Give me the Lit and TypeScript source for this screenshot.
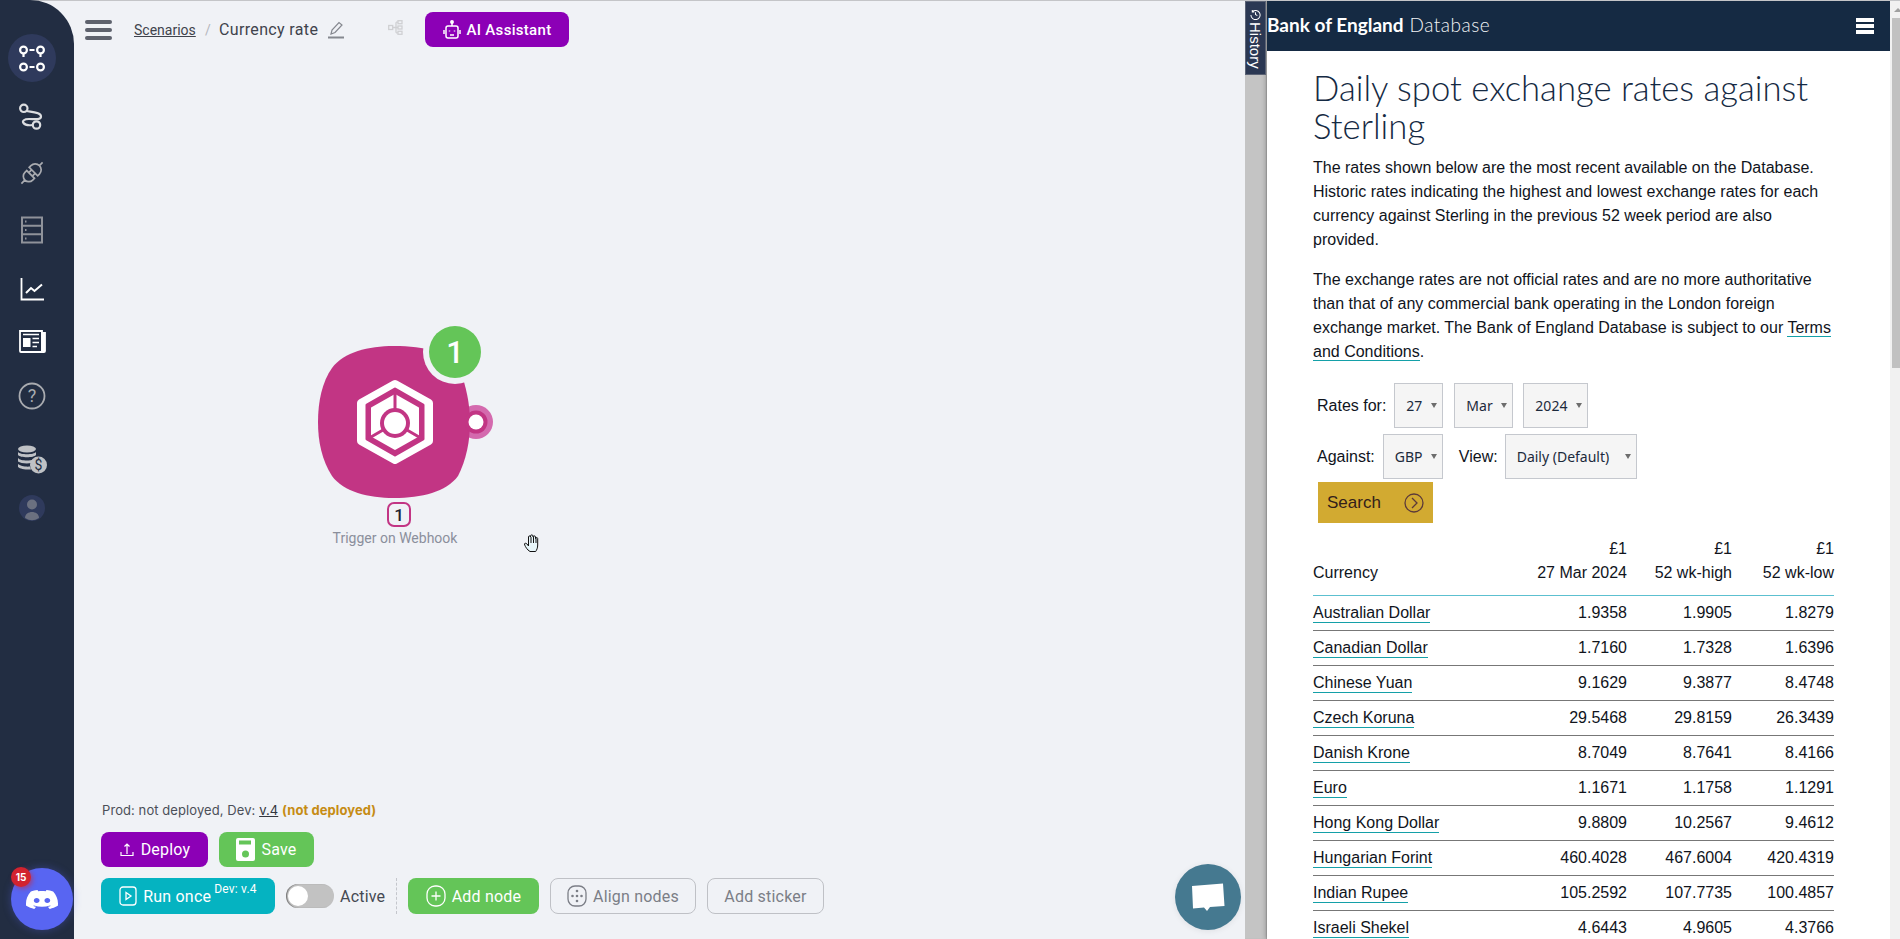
import { LitElement, html, css, svg } from "lit";
import { customElement } from "lit/decorators.js";

const rows = [
  ["Australian Dollar", "1.9358", "1.9905", "1.8279"],
  ["Canadian Dollar", "1.7160", "1.7328", "1.6396"],
  ["Chinese Yuan", "9.1629", "9.3877", "8.4748"],
  ["Czech Koruna", "29.5468", "29.8159", "26.3439"],
  ["Danish Krone", "8.7049", "8.7641", "8.4166"],
  ["Euro", "1.1671", "1.1758", "1.1291"],
  ["Hong Kong Dollar", "9.8809", "10.2567", "9.4612"],
  ["Hungarian Forint", "460.4028", "467.6004", "420.4319"],
  ["Indian Rupee", "105.2592", "107.7735", "100.4857"],
  ["Israeli Shekel", "4.6443", "4.9605", "4.3766"],
];

const navIcons = [
  svg`<svg width="30" height="30" viewBox="0 0 30 30" fill="none" stroke="#fff" stroke-width="2.2"><circle cx="6.5" cy="7" r="3.4"/><circle cx="23.5" cy="7" r="3.4"/><circle cx="6.5" cy="24" r="3.4"/><circle cx="23.500" cy="24" r="3.4"/><path d="M12.500 7h5M6.500 10.500v3.500M23.500 10.500v3.500M12.500 24h5"/></svg>`,
  svg`<svg width="30" height="30" viewBox="0 0 30 30" fill="none" stroke="#dcdde0" stroke-width="2.2"><circle cx="6.800" cy="7.300" r="3.700"/><circle cx="19.500" cy="24" r="3.700"/><path d="M9.500 10C13 11 24 11 24 15.500C24 19 19 18 12 18C7 18 5 20 6.500 22C8 24 12 24.500 15.500 24"/></svg>`,
  svg`<svg width="30" height="30" viewBox="0 0 30 30" fill="none" stroke="#a9abb0" stroke-width="1.700"><g transform="rotate(-45 15 15)"><path d="M0 15h5.500M13 9.500H10.500a5.500 5.500 0 0 0 0 11H13zM13 12.500h3.500M13 17.500h3.500M17 9h2.500a6 6 0 0 1 0 12H17zM25.500 15H30"/></g></svg>`,
  svg`<svg width="30" height="30" viewBox="0 0 30 30" fill="none" stroke="#8f929a" stroke-width="2"><rect x="5" y="2.500" width="20" height="25"/><path d="M5 10.800h20M5 19.200h20"/><path d="M8 6.500h1.500M8 15h1.500M8 23.500h1.500"/></svg>`,
  svg`<svg width="30" height="30" viewBox="0 0 30 30" fill="none" stroke="#fff" stroke-width="1.800"><path d="M4.500 4v21.500H27"/><path d="M9 19l5-5 3.500 3L25 10.500" stroke-width="2"/></svg>`,
  svg`<svg width="30" height="30" viewBox="0 0 30 30" fill="none" stroke="#fff" stroke-width="1.800"><path d="M3 5h22v21H4a1 1 0 0 1-1-1z"/><path d="M25 7h3v18a1 1 0 0 1-1 1h-2z" fill="#fff"/><rect x="6" y="12" width="7.500" height="9" fill="#fff" stroke="none"/><path d="M6 8.500h16M15.500 12.500H22M15.500 16.500H22M15.500 20.500H20" stroke-width="1.600"/></svg>`,
  svg`<svg width="30" height="30" viewBox="0 0 30 30" fill="none"><circle cx="15" cy="15" r="12.500" stroke="#a9abb0" stroke-width="1.800"/><text x="15" y="21" text-anchor="middle" font-family="Roboto" font-size="18" fill="#a9abb0">?</text></svg>`,
  svg`<svg width="32" height="30" viewBox="0 0 32 30" fill="#bfc1c5"><ellipse cx="11" cy="5" rx="9" ry="3.500"/><path d="M2 8c2 3 16 3 18 0v3c-2 3-16 3-18 0zM2 14c2 3 12 3 15 1.500l-1.500 3.500c-4 .8-11 .5-13.500-1.500zM2 20c2 2 8 3 12 2.500l1 3c-5 .3-11-.5-13-2.500z"/><circle cx="22.500" cy="21" r="8.500"/><text x="22.500" y="26" text-anchor="middle" font-family="Roboto" font-size="14" fill="#222d42">$</text></svg>`,
  svg`<svg width="30" height="30" viewBox="0 0 30 30"><circle cx="15" cy="15" r="13" fill="#2f3a5c"/><circle cx="15" cy="11.500" r="5" fill="#6b7080"/><path d="M8 25c0-8 14-8 14 0a13 13 0 0 1-14 0z" fill="#6b7080"/></svg>`,
];

const chev = svg`<svg class="ring" width="20" height="20" viewBox="0 0 20 20" fill="none" stroke="#5c3a3a" stroke-width="1.300"><circle cx="10" cy="10" r="9"/><path d="M8 5l5 5-5 5"/></svg>`;

@customElement("pick-box")
class PickBox extends LitElement {
  static properties = { v: {} };
  v = "";
  static styles = css`
    :host { display: block; position: relative; height: 45px; box-sizing: border-box; border: 1px solid #c5c8ce; background: #f5f5f5; }
    .s { appearance: none; border: 0; background: transparent; width: 100%; height: 100%; padding: 0 0 0 11px; font: 14px "Noto Sans", sans-serif; color: #1c2a3c; outline: none; }
    .a { position: absolute; right: 5px; top: 19px; width: 0; height: 0; border: 3.500px solid transparent; border-top: 5px solid #6d6d6d; border-bottom: 0; }
  `;
  render() {
    return html`<select class="s"><option>${this.v}</option></select><span class="a"></span>`;
  }
}

@customElement("app-root")
export class AppRoot extends LitElement {
  static styles = css`
    :host { display: block; width: 1900px; height: 939px; overflow: hidden; font-family: Roboto, sans-serif; background: #f0f2f6; }
    * { box-sizing: border-box; }
    .page { display: flex; height: 939px; position: relative; }
    .topline { position: absolute; left: 0; right: 0; top: 0; height: 1px; background: #c4c5c8; z-index: 3; }
    .side { width: 74px; flex: none; background: #222d42; border-top-right-radius: 44px; padding: 29px 11px 0 0; display: grid; grid-template-rows: 58px 58px 56px 58px 60px 44px 66px 60px 38px; justify-items: center; align-items: center; position: relative; z-index: 4; }
    .nav { width: 48px; height: 48px; border-radius: 50%; display: flex; align-items: center; justify-content: center; }
    .nav.on { background: #2f3a5c; }
    .canvas { position: relative; width: 1171px; flex: none; display: flex; flex-direction: column; }
    .top { display: flex; align-items: center; height: 35px; margin-top: 12px; padding-left: 11px; color: #3c4048; }
    .burger { width: 27px; display: flex; flex-direction: column; gap: 4px; margin-right: 22px; }
    .burger i { display: block; height: 4px; border-radius: 2px; background: #5e626d; }
    .crumb { font-size: 14px; text-decoration: underline; color: #3f434c; width: 62px; flex: none; }
    .sl { margin: 0 9px; color: #b5b7bd; font-size: 14px; width: 5px; flex: none; }
    .name { font-size: 16px; letter-spacing: .35px; color: #3f434c; width: 99px; flex: none; white-space: nowrap; }
    .pen { margin: 0 0 0 10px; display: flex; }
    .flow { margin: -4px 22px 0 44px; display: flex; }
    .ai { height: 35px; width: 144px; border-radius: 8px; background: #8c00b6; color: #fff; font-size: 15px; font-weight: 500; letter-spacing: .3px; display: flex; align-items: center; justify-content: center; gap: 6px; }
    .bottom { margin-top: auto; padding: 0 0 25px 27px; }
    .status { font-family: Inter, sans-serif; font-size: 13px; letter-spacing: .08px; color: #4b4f58; line-height: 16px; margin: 0 0 14px 1px; }
    .status u { color: #33363d; }
    .status b { color: #c68c14; font-weight: 700; }
    .btns { display: flex; align-items: center; }
    .btns + .btns { margin-top: 11px; }
    .btn { height: 35px; border-radius: 8px; color: #fff; font-size: 16px; letter-spacing: .2px; display: flex; align-items: center; justify-content: center; gap: 6px; flex: none; }
    .tall { height: 36px; }
    .purple { background: #8c00b6; width: 107px; }
    .green { background: #64c558; }
    .save { width: 95px; margin-left: 11px; }
    .run { background: #05b3c1; width: 174px; }
    .run sup { font-size: 12px; align-self: flex-start; margin: 4px 0 0 -3px; line-height: 14px; }
    .toggle { width: 48px; height: 24px; border-radius: 12px; background: #c2c2c2; margin-left: 11px; padding: 2px; box-shadow: inset 1px 0 1px #777; }
    .toggle i { display: block; width: 20px; height: 20px; border-radius: 50%; background: #fff; }
    .act { font-size: 16px; color: #454952; margin-left: 6px; letter-spacing: .2px; width: 45px; flex: none; }
    .dash { height: 36px; border-left: 1px dashed #c4c6cc; margin: 0 11px; }
    .addn { width: 131px; }
    .ghost { border: 1px solid #bfc1c6; color: #7b7e86; background: transparent; margin-left: 11px; }
    .align { width: 146px; }
    .stick { width: 117px; }
    .node { position: absolute; left: 236px; top: 320px; width: 190px; height: 190px; }
    .idx { position: absolute; left: 313px; top: 502px; width: 24px; height: 25px; border: 2px solid #c23584; border-radius: 7px; display: flex; align-items: center; justify-content: center; font-size: 17px; font-weight: 500; color: #1e2230; }
    .lbl { position: absolute; left: 221px; width: 200px; top: 530px; text-align: center; font-size: 14px; color: #8b8f9c; line-height: 16px; }
    .hand { position: absolute; left: 449px; top: 533px; }
    .bubble { position: absolute; left: 1101px; top: 864px; width: 66px; height: 66px; border-radius: 50%; background: #457990; display: flex; align-items: center; justify-content: center; box-shadow: 0 1px 6px rgba(0,0,0,.08); }
    .discord { position: absolute; left: 11px; top: 868px; width: 62px; height: 62px; border-radius: 50%; background: #5865f2; display: flex; align-items: center; justify-content: center; box-shadow: 0 0 8px rgba(88,101,242,.35); z-index: 5; }
    .count { position: absolute; left: 11px; top: 867px; width: 20px; height: 20px; border-radius: 50%; background: #d2232f; color: #fff; font: 700 10px/20px Inter, sans-serif; text-align: center; z-index: 6; box-shadow: 2px 2px 4px rgba(210,35,47,.5); }
    .split { width: 22px; flex: none; background: #c4c4c4; position: relative; box-shadow: inset -1px 0 1px #aaa; }
    .hist { position: absolute; left: 0; top: 1px; width: 21px; height: 74px; background: #2b3853; border: 1px solid #5a6274; color: #fff; display: flex; flex-direction: column; align-items: center; padding-top: 7px; gap: 2px; z-index: 2; }
    .hist span { writing-mode: vertical-rl; font: 15px/1 "Liberation Sans", sans-serif; }
    .panel { width: 623px; flex: none; background: #fff; box-shadow: -2px 0 4px rgba(0,0,0,.18); font-family: "Liberation Sans", Arial, sans-serif; font-size: 16px; line-height: 24px; color: #10141c; position: relative; }
    .head { height: 50px; margin-top: 1px; background: #152a43; color: #fff; display: flex; align-items: center; justify-content: space-between; padding: 0 16px 0 0; font: 19px Lato, sans-serif; }
    .head span { margin-top: -3px; }
    .head b { font-weight: 700; }
    .head em { font-style: normal; font-weight: 300; color: #f2f3f5; margin-left: 6px; letter-spacing: .5px; }
    .menu { width: 18px; display: flex; flex-direction: column; gap: 2px; }
    .menu i { display: block; height: 4px; background: #fff; }
    .body { padding: 18px 0 0 46px; width: 566px; }
    h1 { margin: 0 0 11px; font: 300 34.700px/38px Lato, sans-serif; color: #152a43; }
    p { margin: 0 0 16px; }
    p a { color: inherit; text-decoration: none; border-bottom: 1px solid #14a0a8; }
    .row { display: flex; align-items: center; margin-left: 4px; height: 45px; }
    .row + .row { margin-top: 6px; }
    .first { margin-top: 19px; }
    .r1 { margin-left: 8px; width: 49px; }
    .r2 { margin-left: 11px; width: 59px; }
    .r3 { margin-left: 10px; width: 65px; }
    .g { margin-left: 8px; width: 60px; }
    .vl { margin-left: 16px; }
    .v { margin-left: 7px; width: 132px; }
    .search { margin: 3px 0 0 5px; width: 115px; height: 41px; background: #d2aa31; color: #33201a; font-size: 17px; display: flex; align-items: center; padding: 0 9px; justify-content: space-between; }
    table { border-collapse: collapse; table-layout: fixed; width: 521px; margin-top: 14px; }
    .c1 { width: 200px; }
    .c2 { width: 114px; }
    .c3 { width: 105px; }
    .c4 { width: 102px; }
    th, td { padding: 0; font-weight: 400; text-align: right; }
    th { padding-bottom: 10px; vertical-align: bottom; border-bottom: 1px solid #5cc0d0; }
    td { height: 35px; border-bottom: 1px solid #777; }
    .l { text-align: left; }
    td a { border-bottom: 1.500px solid #14a0a8; padding-bottom: 1px; }
    .bar { width: 10px; flex: none; background: #f1f1f1; position: relative; }
    .bar i { position: absolute; left: 2px; right: 0; top: 18px; height: 350px; background: #c1c1c1; }
    .bar s { position: absolute; left: 4px; top: 8px; border: 4px solid transparent; border-bottom: 4px solid #a0a0a0; border-top: 0; }
  `;

  render() {
    return html`<div class="page">
      <div class="topline"></div>
      <nav class="side">
        ${navIcons.map((ic, i) => html`<div class="nav ${i === 0 ? "on" : ""}">${ic}</div>`)}
      </nav>
      <main class="canvas">
        <div class="top">
          <div class="burger"><i></i><i></i><i></i></div>
          <span class="crumb">Scenarios</span><span class="sl">/</span><span class="name">Currency rate</span>
          <span class="pen"><svg width="16" height="18" viewBox="0 0 16 18" fill="none" stroke="#85888f" stroke-width="1.200"><path d="M3 13l1-4 7-7.500 3 2.500-7 7.500z"/><path d="M0 16.500h16" stroke-width="2"/></svg></span>
          <span class="flow"><svg width="15" height="15" viewBox="0 0 15 15" fill="none" stroke="#cfd0d3" stroke-width="1.300"><rect x=".7" y="5.500" width="4" height="4"/><rect x="10" y=".7" width="4" height="3"/><rect x="10" y="6" width="4" height="3"/><rect x="10" y="11.300" width="4" height="3"/><path d="M4.700 7.500H10M8 2.200v10.600M8 2.200h2M8 12.800h2"/></svg></span>
          <div class="ai"><svg width="18" height="19" viewBox="0 0 18 19" fill="none" stroke="#fff" stroke-width="1.500"><path d="M9 1v5"/><circle cx="9" cy="2" r="1.200" fill="#fff"/><rect x="3" y="6" width="12" height="12" rx="2"/><path d="M1 10v4M17 10v4"/><path d="M6.500 10.500v1M11.500 10.500v1M7 15h4"/></svg>AI Assistant</div>
        </div>

        <svg class="node" viewBox="0 0 190 190">
          <circle cx="166" cy="102" r="17" fill="#d46aae"/>
          <path d="M84 26C115 26 140 32 150 50C156 66 160 84 160 102C160 122 156 140 148 156C136 172 112 178 84 178C58 178 34 172 22 156C12 140 8 122 8 102C8 82 12 62 22 48C34 32 58 26 84 26Z" fill="#c23584"/>
          <circle cx="166" cy="102" r="11.500" fill="#c23584"/>
          <circle cx="166" cy="102" r="7.500" fill="#fff"/>
          <circle cx="145" cy="32" r="32" fill="#f0f2f6"/>
          <circle cx="145" cy="32" r="26" fill="#64c558"/>
          <text x="145" y="43" text-anchor="middle" font-family="Roboto" font-weight="500" font-size="31" fill="#fff">1</text>
          <path d="M85 64L119 83V121L85 140L51 121V83Z" fill="#fff" stroke="#fff" stroke-width="8" stroke-linejoin="round"/>
          <path d="M85 69L113 85V119L85 135L57 119V85Z" fill="#c23584" stroke="#c23584" stroke-width="3" stroke-linejoin="round"/>
          <path d="M85 75L108 88V116L85 129L62 116V88Z" fill="#fff" stroke="#fff" stroke-width="2" stroke-linejoin="round"/>
          <path d="M85 72V103M85 103L61 117M85 103L109 117" stroke="#c23584" stroke-width="3"/>
          <circle cx="85" cy="103" r="15" fill="#c23584"/>
          <circle cx="85" cy="103" r="11" fill="#fff"/>
        </svg>
        <div class="idx">1</div>
        <div class="lbl">Trigger on Webhook</div>
        <svg class="hand" width="20" height="20" viewBox="0 0 20 20" fill="#e8f6fa" stroke="#111" stroke-width="1"><path d="M5 17C3 15 1.500 12 1.500 11c0-1 1.500-1 2.500 0l1.500 2V4c0-1.500 2-1.500 2 0V3c0-1.500 2.500-1.500 2.500 0v1c0-1.500 2.500-1.500 2.500 0v1.500c0-1.300 2.200-1.300 2.200 0V12c0 3-1 5-2 6.500H7z"/><path d="M8 4v6M10.500 4v6M13 5v5" fill="none"/></svg>

        <section class="bottom">
          <div class="status">Prod: not deployed, Dev: <u>v.4</u> <b>(not deployed)</b></div>
          <div class="btns">
            <div class="btn purple"><svg width="16" height="16" viewBox="0 0 16 16" fill="none" stroke="#fff" stroke-width="1.200"><path d="M8 12V2M5.500 4.500L8 2l2.500 2.500M2 10v3.500h12V10"/></svg>Deploy</div>
            <div class="btn green save"><svg width="19" height="23" viewBox="0 0 19 23"><path d="M2 0h15a2 2 0 0 1 2 2v19a2 2 0 0 1-2 2H2a2 2 0 0 1-2-2V2a2 2 0 0 1 2-2z" fill="#fff"/><rect x="3" y="2.500" width="12" height="4" fill="#64c558"/><circle cx="9.500" cy="16" r="3.500" fill="#64c558"/></svg>Save</div>
          </div>
          <div class="btns">
            <div class="btn tall run"><svg width="18" height="20" viewBox="0 0 18 20" fill="none" stroke="#fff" stroke-width="1.300"><rect x="1" y="1" width="16" height="18" rx="3"/><path d="M7 6.500l5 3.500-5 3.500z"/></svg>Run once<sup>Dev: v.4</sup></div>
            <div class="toggle"><i></i></div>
            <span class="act">Active</span>
            <span class="dash"></span>
            <div class="btn tall green addn"><svg width="20" height="22" viewBox="0 0 20 22" fill="none" stroke="#fff" stroke-width="1.300"><rect x="1" y="1" width="18" height="20" rx="8"/><path d="M10 6.500v9M5.500 11h9"/></svg>Add node</div>
            <div class="btn tall ghost align"><svg width="20" height="22" viewBox="0 0 20 22" fill="none" stroke="#7b7e86" stroke-width="1.300"><rect x="1" y="1" width="18" height="20" rx="7"/><g fill="#7b7e86" stroke="none"><circle cx="10" cy="6" r="1.300"/><circle cx="10" cy="11" r="1.300"/><circle cx="10" cy="16" r="1.300"/><circle cx="5.500" cy="11" r="1.300"/><circle cx="14.500" cy="11" r="1.300"/></g></svg>Align nodes</div>
            <div class="btn tall ghost stick">Add sticker</div>
          </div>
        </section>

        <div class="bubble"><svg width="34" height="28" viewBox="0 0 34 28" fill="#fff"><path d="M1 3L32 0.500L33.500 23L19 24L16 28L13 24.500L2 25.500Z"/></svg></div>
      </main>
      <div class="discord"><svg width="32" height="25" viewBox="0 0 24 24" preserveAspectRatio="none" fill="#fff"><path d="M20.317 4.3698a19.7913 19.7913 0 00-4.8851-1.5152.0741.0741 0 00-.0785.0371c-.211.3753-.4447.8648-.6083 1.2495-1.8447-.2762-3.68-.2762-5.4868 0-.1636-.3933-.4058-.8742-.6177-1.2495a.077.077 0 00-.0785-.037 19.7363 19.7363 0 00-4.8852 1.515.0699.0699 0 00-.0321.0277C.5334 9.0458-.319 13.5799.0992 18.0578a.0824.0824 0 00.0312.0561c2.0528 1.5076 4.0413 2.4228 5.9929 3.0294a.0777.0777 0 00.0842-.0276c.4616-.6304.8731-1.2952 1.226-1.9942a.076.076 0 00-.0416-.1057c-.6528-.2476-1.2743-.5495-1.8722-.8923a.077.077 0 01-.0076-.1277c.1258-.0943.2517-.1923.3718-.2914a.0743.0743 0 01.0776-.0105c3.9278 1.7933 8.18 1.7933 12.0614 0a.0739.0739 0 01.0785.0095c.1202.099.246.1981.3728.2924a.077.077 0 01-.0066.1276 12.2986 12.2986 0 01-1.873.8914.0766.0766 0 00-.0407.1067c.3604.698.7719 1.3628 1.225 1.9932a.076.076 0 00.0842.0286c1.961-.6067 3.9495-1.5219 6.0023-3.0294a.077.077 0 00.0313-.0552c.5004-5.177-.8382-9.6739-3.5485-13.6604a.061.061 0 00-.0312-.0286zM8.02 15.3312c-1.1825 0-2.1569-1.0857-2.1569-2.419 0-1.3332.9555-2.4189 2.157-2.4189 1.2108 0 2.1757 1.0952 2.1568 2.419 0 1.3332-.9555 2.4189-2.1569 2.4189zm7.9748 0c-1.1825 0-2.1569-1.0857-2.1569-2.419 0-1.3332.9554-2.4189 2.1569-2.4189 1.2108 0 2.1757 1.0952 2.1568 2.419 0 1.3332-.946 2.4189-2.1568 2.4189Z"/></svg></div>
      <div class="count">15</div>

      <div class="split">
        <div class="hist"><svg width="11" height="11" viewBox="0 0 12 12" fill="none" stroke="#fff" stroke-width="1.100"><path d="M2.500 3A5 5 0 1 1 1 6.500M2.500 1v2.200h2.200M6 3.500V6l2 1.200"/></svg><span>History</span></div>
      </div>
      <section class="panel">
        <header class="head"><span><b>Bank of England</b><em>Database</em></span><div class="menu"><i></i><i></i><i></i></div></header>
        <div class="body">
          <h1>Daily spot exchange rates against Sterling</h1>
          <p>The rates shown below are the most recent available on the Database. Historic rates indicating the highest and lowest exchange rates for each currency against Sterling in the previous 52 week period are also provided.</p>
          <p>The exchange rates are not official rates and are no more authoritative than that of any commercial bank operating in the London foreign exchange market. The Bank of England Database is subject to our <a>Terms</a> <a>and Conditions</a>.</p>
          <div class="row first"><span>Rates for:</span><pick-box class="r1" v="27"></pick-box><pick-box class="r2" v="Mar"></pick-box><pick-box class="r3" v="2024"></pick-box></div>
          <div class="row"><span>Against:</span><pick-box class="g" v="GBP"></pick-box><span class="vl">View:</span><pick-box class="v" v="Daily (Default)"></pick-box></div>
          <div class="search"><span>Search</span>${chev}</div>
          <table>
            <colgroup><col class="c1"/><col class="c2"/><col class="c3"/><col class="c4"/></colgroup>
            <thead><tr><th class="l">Currency</th><th>£1<br/>27 Mar 2024</th><th>£1<br/>52 wk-high</th><th>£1<br/>52 wk-low</th></tr></thead>
            <tbody>${rows.map((r) => html`<tr><td class="l"><a>${r[0]}</a></td><td>${r[1]}</td><td>${r[2]}</td><td>${r[3]}</td></tr>`)}</tbody>
          </table>
        </div>
      </section>
      <div class="bar"><s></s><i></i></div>
    </div>`;
  }
}

declare global { interface HTMLElementTagNameMap { "pick-box": PickBox } }
